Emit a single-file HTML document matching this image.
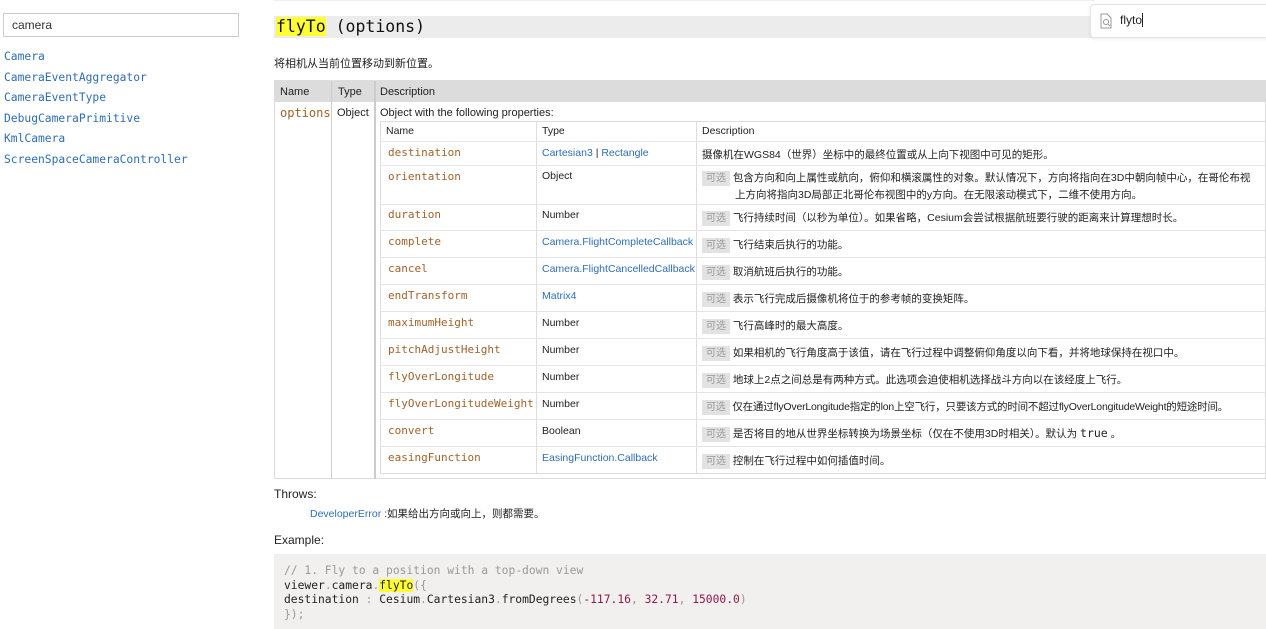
<!DOCTYPE html>
<html><head><meta charset="utf-8"><style>
*{margin:0;padding:0;box-sizing:border-box}
body{width:1266px;height:629px;overflow:hidden;background:#fff;position:relative;font-family:"Liberation Sans","Noto Sans CJK SC",sans-serif;color:#222;font-size:11px}
.a{position:absolute;white-space:nowrap}
.mono{font-family:"DejaVu Sans Mono","Liberation Mono",monospace}
.lnk{color:#2f6db5}
.nm{color:#a0622d;font-family:"DejaVu Sans Mono","Liberation Mono",monospace;font-size:11px}
.badge{background:#e2e2e2;color:#999;font-size:10px;padding:2px 4px}
.hl{border-top:1px solid #e4e4e4}
</style></head><body>
<div class="a" style="left:3px;top:13px;width:236px;height:24px;border:1px solid #ccc"></div>
<div class="a" style="left:12px;top:18px;font-size:12px;color:#333">camera</div>
<div class="a mono lnk" style="left:4px;top:47px;font-size:11.3px;line-height:20.6px">Camera<br>CameraEventAggregator<br>CameraEventType<br>DebugCameraPrimitive<br>KmlCamera<br>ScreenSpaceCameraController</div>

<div class="a" style="left:274px;top:0;width:820px;height:1px;background:#eee"></div>
<div class="a" style="left:274px;top:16px;width:992px;height:22px;background:#ececec"></div>
<div class="a mono" style="left:276px;top:17px;font-size:16.5px;line-height:20px;color:#111"><span style="background:#ffff33">flyTo</span> (options)</div>

<div class="a" style="left:1090px;top:4px;width:180px;height:34px;background:#fff;border:1px solid #e4e4e4;border-radius:4px;box-shadow:0 1px 3px rgba(0,0,0,.08)"></div>
<svg class="a" style="left:1099px;top:13px" width="14" height="16" viewBox="0 0 14 16"><path d="M2 1h6l4 4v10H2z" fill="none" stroke="#999" stroke-width="1"/><circle cx="7" cy="9" r="2.5" fill="none" stroke="#999"/><path d="M9 11l2 2" stroke="#999"/></svg>
<div class="a" style="left:1120px;top:13px;font-size:12px;color:#222">flyto<span style="border-left:1px solid #222;margin-left:0"></span></div>

<div class="a" style="left:274px;top:55px;font-size:11px">将相机从当前位置移动到新位置。</div>

<!-- outer table -->
<div class="a" style="left:274px;top:80px;width:992px;height:399px;border:1px solid #ddd"></div>
<div class="a" style="left:274px;top:81px;width:992px;height:21px;background:#dcdcdc"></div>
<div class="a" style="left:331px;top:81px;width:1px;height:398px;background:#ccc"></div>
<div class="a" style="left:374px;top:81px;width:2px;height:398px;background:#ccc"></div>
<div class="a" style="left:280px;top:86px">Name</div>
<div class="a" style="left:338px;top:86px">Type</div>
<div class="a" style="left:380px;top:86px">Description</div>
<div class="a mono" style="left:280px;top:106px;font-size:12px;color:#a0622d">options</div>
<div class="a" style="left:337px;top:107px">Object</div>
<div class="a" style="left:380px;top:107px">Object with the following properties:</div>

<!-- inner table -->
<div class="a" style="left:380px;top:121px;width:886px;height:353px;border:1px solid #ddd;border-right:none"></div>
<div class="a" style="left:536px;top:121px;width:1px;height:353px;background:#ddd"></div>
<div class="a" style="left:696px;top:121px;width:1px;height:353px;background:#ddd"></div>
<div class="a" style="left:386px;top:125px;font-size:10.5px">Name</div>
<div class="a" style="left:542px;top:125px;font-size:10.5px">Type</div>
<div class="a" style="left:702px;top:125px;font-size:10.5px">Description</div>

<div class="a hl" style="left:380px;top:141px;width:886px"></div>
<div class="a nm" style="left:388px;top:146px">destination</div>
<div class="a" style="left:542px;top:147px;font-size:10.5px"><span class="lnk">Cartesian3</span> | <span class="lnk">Rectangle</span></div>
<div class="a" style="left:702px;top:147px;font-size:10.5px">摄像机在WGS84（世界）坐标中的最终位置或从上向下视图中可见的矩形。</div>

<div class="a hl" style="left:380px;top:165px;width:886px"></div>
<div class="a nm" style="left:388px;top:170px">orientation</div>
<div class="a" style="left:542px;top:170px;font-size:10.5px">Object</div>
<div class="a" style="left:702px;top:170px;font-size:10.5px;line-height:16px"><span class="badge">可选</span> 包含方向和向上属性或航向，俯仰和横滚属性的对象。默认情况下，方向将指向在3D中朝向帧中心，在哥伦布视<br><span style="padding-left:33px">上方向将指向3D局部正北哥伦布视图中的y方向。在无限滚动模式下，二维不使用方向。</span></div>

<div class="a hl" style="left:380px;top:204px;width:886px"></div>
<div class="a nm" style="left:388px;top:208px">duration</div>
<div class="a" style="left:542px;top:209px;font-size:10.5px">Number</div>
<div class="a" style="left:702px;top:209px;font-size:10.5px"><span class="badge">可选</span> 飞行持续时间（以秒为单位）。如果省略，Cesium会尝试根据航班要行驶的距离来计算理想时长。</div>

<div class="a hl" style="left:380px;top:230px;width:886px"></div>
<div class="a nm" style="left:388px;top:235px">complete</div>
<div class="a lnk" style="left:542px;top:236px;font-size:10.5px">Camera.FlightCompleteCallback</div>
<div class="a" style="left:702px;top:236px;font-size:10.5px"><span class="badge">可选</span> 飞行结束后执行的功能。</div>

<div class="a hl" style="left:380px;top:257px;width:886px"></div>
<div class="a nm" style="left:388px;top:262px">cancel</div>
<div class="a lnk" style="left:542px;top:263px;font-size:10.5px">Camera.FlightCancelledCallback</div>
<div class="a" style="left:702px;top:263px;font-size:10.5px"><span class="badge">可选</span> 取消航班后执行的功能。</div>

<div class="a hl" style="left:380px;top:284px;width:886px"></div>
<div class="a nm" style="left:388px;top:289px">endTransform</div>
<div class="a lnk" style="left:542px;top:290px;font-size:10.5px">Matrix4</div>
<div class="a" style="left:702px;top:290px;font-size:10.5px"><span class="badge">可选</span> 表示飞行完成后摄像机将位于的参考帧的变换矩阵。</div>

<div class="a hl" style="left:380px;top:311px;width:886px"></div>
<div class="a nm" style="left:388px;top:316px">maximumHeight</div>
<div class="a" style="left:542px;top:317px;font-size:10.5px">Number</div>
<div class="a" style="left:702px;top:317px;font-size:10.5px"><span class="badge">可选</span> 飞行高峰时的最大高度。</div>

<div class="a hl" style="left:380px;top:338px;width:886px"></div>
<div class="a nm" style="left:388px;top:343px">pitchAdjustHeight</div>
<div class="a" style="left:542px;top:344px;font-size:10.5px">Number</div>
<div class="a" style="left:702px;top:344px;font-size:10.5px"><span class="badge">可选</span> 如果相机的飞行角度高于该值，请在飞行过程中调整俯仰角度以向下看，并将地球保持在视口中。</div>

<div class="a hl" style="left:380px;top:365px;width:886px"></div>
<div class="a nm" style="left:388px;top:370px">flyOverLongitude</div>
<div class="a" style="left:542px;top:371px;font-size:10.5px">Number</div>
<div class="a" style="left:702px;top:371px;font-size:10.5px"><span class="badge">可选</span> 地球上2点之间总是有两种方式。此选项会迫使相机选择战斗方向以在该经度上飞行。</div>

<div class="a hl" style="left:380px;top:392px;width:886px"></div>
<div class="a nm" style="left:388px;top:397px">flyOverLongitudeWeight</div>
<div class="a" style="left:542px;top:398px;font-size:10.5px">Number</div>
<div class="a" style="left:702px;top:398px;font-size:10.5px;letter-spacing:-0.2px"><span class="badge">可选</span> 仅在通过flyOverLongitude指定的lon上空飞行，只要该方式的时间不超过flyOverLongitudeWeight的短途时间。</div>

<div class="a hl" style="left:380px;top:419px;width:886px"></div>
<div class="a nm" style="left:388px;top:424px">convert</div>
<div class="a" style="left:542px;top:425px;font-size:10.5px">Boolean</div>
<div class="a" style="left:702px;top:425px;font-size:10.5px"><span class="badge">可选</span> 是否将目的地从世界坐标转换为场景坐标（仅在不使用3D时相关）。默认为 <span class="mono" style="font-size:11.5px">true</span> 。</div>

<div class="a hl" style="left:380px;top:446px;width:886px"></div>
<div class="a nm" style="left:388px;top:451px">easingFunction</div>
<div class="a lnk" style="left:542px;top:452px;font-size:10.5px">EasingFunction.Callback</div>
<div class="a" style="left:702px;top:452px;font-size:10.5px"><span class="badge">可选</span> 控制在飞行过程中如何插值时间。</div>

<div class="a" style="left:274px;top:487px;font-size:12px">Throws:</div>
<div class="a" style="left:310px;top:506px;font-size:10.5px"><span class="lnk">DeveloperError</span> :如果给出方向或向上，则都需要。</div>
<div class="a" style="left:274px;top:533px;font-size:12px">Example:</div>
<div class="a" style="left:274px;top:554px;width:992px;height:75px;background:#f1f0ef"></div>
<div class="a mono" style="left:284px;top:564px;font-size:11.3px;line-height:14.5px;color:#222"><span style="color:#999">// 1. Fly to a position with a top-down view</span><br>viewer<span style="color:#999">.</span>camera<span style="color:#999">.</span><span style="background:#ffff33">flyTo</span><span style="color:#999">({</span><br>    destination <span style="color:#999">:</span> Cesium<span style="color:#999">.</span>Cartesian3<span style="color:#999">.</span>fromDegrees<span style="color:#999">(</span><span style="color:#8b1a4f">-117.16</span><span style="color:#999">,</span> <span style="color:#8b1a4f">32.71</span><span style="color:#999">,</span> <span style="color:#8b1a4f">15000.0</span><span style="color:#999">)</span><br><span style="color:#999">});</span></div>
</body></html>
